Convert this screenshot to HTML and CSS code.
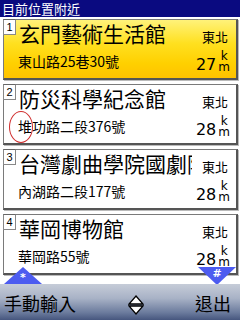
FILE: index.html
```html
<!DOCTYPE html>
<html>
<head>
<meta charset="utf-8">
<link rel="stylesheet" href="styles.css">
</head>
<body>
<div class="screen">
  <div class="header">目前位置附近</div>
  <div class="list">
    <div class="card selected">
      <div class="row top">
        <span class="num">1</span>
        <span class="title">玄門藝術生活館</span>
        <span class="dir">東北</span>
      </div>
      <div class="row bottom">
        <span class="addr">東山路25巷30號</span>
        <span class="dist"><span class="val">27</span><span class="unit"><span>k</span><span>m</span></span></span>
      </div>
    </div>
    <div class="card">
      <div class="row top">
        <span class="num">2</span>
        <span class="title">防災科學紀念館</span>
        <span class="dir">東北</span>
      </div>
      <div class="row bottom">
        <span class="addr">堆功路二段376號</span>
        <span class="dist"><span class="val">28</span><span class="unit"><span>k</span><span>m</span></span></span>
      </div>
      <span class="circle"></span>
    </div>
    <div class="card">
      <div class="row top">
        <span class="num">3</span>
        <span class="title">台灣劇曲學院國劇陳列館</span>
        <span class="dir">東北</span>
      </div>
      <div class="row bottom">
        <span class="addr">內湖路二段177號</span>
        <span class="dist"><span class="val">28</span><span class="unit"><span>k</span><span>m</span></span></span>
      </div>
    </div>
    <div class="card">
      <div class="row top">
        <span class="num">4</span>
        <span class="title">華岡博物館</span>
        <span class="dir">東北</span>
      </div>
      <div class="row bottom">
        <span class="addr">華岡路55號</span>
        <span class="dist"><span class="val">28</span><span class="unit"><span>k</span><span>m</span></span></span>
      </div>
    </div>
    <div class="tri up"><span>*</span></div>
    <div class="tri down"><span>#</span></div>
  </div>
  <div class="softbar">
    <span class="soft">手動輸入</span>
    <svg class="nav" width="16" height="20" viewBox="0 0 16 20">
      <path d="M8 1 L15 9 L1 9 Z" fill="#fff" stroke="#000" stroke-width="1.3" stroke-linejoin="miter"/>
      <path d="M1 11 L15 11 L8 19 Z" fill="#fff" stroke="#000" stroke-width="1.3" stroke-linejoin="miter"/>
    </svg>
    <span class="soft">退出</span>
  </div>
</div>
</body>
</html>
```

FILE: styles.css
```css
html, body {
  margin: 0;
  padding: 0;
  background: #fff;
}
.screen {
  width: 240px;
  height: 320px;
  overflow: hidden;
  display: flex;
  flex-direction: column;
  font-family: "Noto Sans CJK TC", "Noto Sans", sans-serif;
  color: #000;
}
.header {
  height: 17px;
  flex: none;
  background: #0a0a80;
  color: #fff;
  font-size: 13px;
  line-height: 17px;
  padding-left: 2px;
}
.list {
  position: relative;
  flex: 1;
  overflow: hidden;
  display: flex;
  flex-direction: column;
  gap: 4px;
  padding: 2px 2px 0 3px;
  background: #fff;
}
.card {
  position: relative;
  flex: none;
  height: 58px;
  background: #fff;
  border: 1px solid #7a7a7a;
  border-right: 2px solid #555;
  border-bottom: 2px solid #555;
  box-shadow: 1px 1px 0 #bbb;
  display: flex;
  flex-direction: column;
}
.card.selected {
  background: linear-gradient(#fff27a 0%, #ffe020 40%, #ffd000 75%, #ffc200 100%);
}
.row {
  display: flex;
  align-items: center;
}
.row.top {
  height: 29px;
  align-items: flex-start;
}
.num {
  flex: none;
  width: 11px;
  height: 14px;
  margin: -1px 0 0 -1px;
  background: #fff;
  border: 1px solid #888;
  border-top-color: #666;
  font-family: "Liberation Sans", sans-serif;
  font-size: 11px;
  line-height: 14px;
  text-align: center;
}
.title {
  flex: 1;
  min-width: 0;
  overflow: hidden;
  white-space: nowrap;
  font-size: 21px;
  line-height: 25px;
  margin: 1px 0 0 3px;
}
.dir {
  flex: none;
  font-size: 13px;
  line-height: 16px;
  margin: 9px 8px 0 10px;
}
.row.bottom {
  height: 28px;
  justify-content: space-between;
  padding-left: 14px;
}
.addr {
  font-size: 14px;
  line-height: 16px;
  margin-top: -4px;
}
.dist {
  display: flex;
  align-items: flex-end;
  margin-right: 6px;
  margin-top: -2px;
  font-family: "DejaVu Sans", sans-serif;
}
.val {
  font-size: 16px;
  line-height: 16px;
}
.unit {
  display: flex;
  flex-direction: column;
  align-items: center;
  margin-left: 2px;
  font-size: 12px;
  line-height: 11px;
}
.circle {
  position: absolute;
  left: 5px;
  top: 26px;
  width: 22px;
  height: 30px;
  border: 1px solid #d03030;
  border-radius: 50%;
}
.tri {
  position: absolute;
  width: 0;
  height: 0;
  border-left: 19px solid transparent;
  border-right: 19px solid transparent;
}
.tri span {
  position: absolute;
  left: -5px;
  width: 10px;
  text-align: center;
  color: #fff;
  font-family: "DejaVu Sans", sans-serif;
  font-weight: bold;
  font-size: 11px;
  line-height: 11px;
}
.tri.up {
  left: 4px;
  bottom: 0;
  border-bottom: 17px solid #4d5cf0;
}
.tri.up span {
  top: 5px;
}
.tri.down {
  right: 4px;
  bottom: -1px;
  border-top: 18px solid #4d5cf0;
}
.tri.down span {
  top: -17px;
}
.softbar {
  height: 36px;
  flex: none;
  display: flex;
  align-items: center;
  justify-content: space-between;
  padding: 0 9px 0 4px;
  background: linear-gradient(#c6ccd8 0%, #a8b2c6 40%, #6a7a9c 80%, #46567e 100%);
}
.soft {
  font-size: 18px;
  line-height: 22px;
  margin-top: 1px;
}
.nav {
  margin-top: 6px;
}
```
